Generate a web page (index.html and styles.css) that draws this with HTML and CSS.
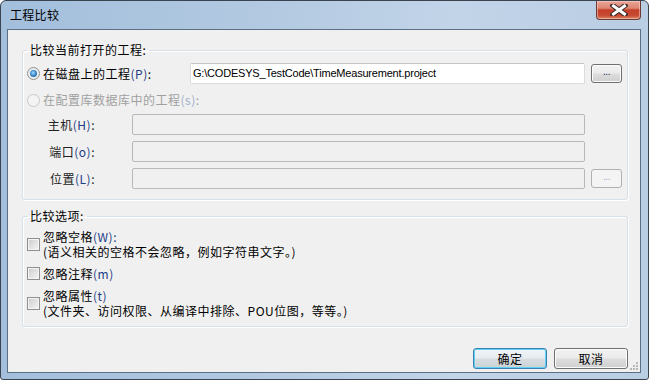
FILE: index.html
```html
<!DOCTYPE html>
<html>
<head>
<meta charset="utf-8">
<title>工程比较</title>
<link rel="stylesheet" href="styles.css">
</head>
<body>
<div class="window">
  <div class="titlebar">
    <span class="title">工程比较</span>
    <div class="close">
      <svg width="18" height="12" viewBox="0 0 18 12">
        <path d="M3 1.5 L15 10.5 M15 1.5 L3 10.5" stroke="#3b2a28" stroke-width="5" stroke-linecap="square"/>
        <path d="M3.5 2 L14.5 10 M14.5 2 L3.5 10" stroke="#ffffff" stroke-width="3" stroke-linecap="square"/>
      </svg>
    </div>
  </div>
  <div class="client">
    <fieldset class="group g1">
      <legend>比较当前打开的工程:</legend>
      <div class="row r1">
        <label class="opt"><span class="radio checked"></span>在磁盘上的工程<span class="acc">(P)</span>:</label>
        <div class="input">G:\CODESYS_TestCode\TimeMeasurement.project</div>
        <div class="btn small">...</div>
      </div>
      <div class="row r2">
        <label class="opt disabled"><span class="radio"></span>在配置库数据库中的工程<span class="acc">(s)</span>:</label>
      </div>
      <div class="row field">
        <span class="flabel">主机<span class="acc">(H)</span>:</span>
        <div class="input off"></div>
        <div class="spacer"></div>
      </div>
      <div class="row field">
        <span class="flabel">端口<span class="acc">(o)</span>:</span>
        <div class="input off"></div>
        <div class="spacer"></div>
      </div>
      <div class="row field">
        <span class="flabel">位置<span class="acc">(L)</span>:</span>
        <div class="input off"></div>
        <div class="btn small off">...</div>
      </div>
    </fieldset>
    <fieldset class="group g2">
      <legend>比较选项:</legend>
      <div class="check">
        <span class="box"></span>
        <div class="ctext"><span class="line">忽略空格<span class="acc">(W):</span></span><span class="line">(语义相关的空格不会忽略，例如字符串文字。)</span></div>
      </div>
      <div class="check">
        <span class="box"></span>
        <div class="ctext"><span class="line">忽略注释<span class="acc">(m)</span></span></div>
      </div>
      <div class="check">
        <span class="box"></span>
        <div class="ctext"><span class="line">忽略属性<span class="acc">(t)</span></span><span class="line">(文件夹、访问权限、从编译中排除、POU位图，等等。)</span></div>
      </div>
    </fieldset>
    <div class="buttons">
      <div class="btn big default">确定</div>
      <div class="btn big">取消</div>
    </div>
    <svg class="grip" width="8" height="8" viewBox="0 0 8 8">
      <g fill="#b8b8b8">
        <rect x="6" y="0" width="2" height="2"/>
        <rect x="3" y="3" width="2" height="2"/><rect x="6" y="3" width="2" height="2"/>
        <rect x="0" y="6" width="2" height="2"/><rect x="3" y="6" width="2" height="2"/><rect x="6" y="6" width="2" height="2"/>
      </g>
    </svg>
  </div>
</div>
</body>
</html>
```
FILE: styles.css
```css
html, body {
  margin: 0;
  padding: 0;
}
body {
  width: 649px;
  height: 380px;
  overflow: hidden;
  background: #ffffff;
  font-family: "Noto Sans CJK SC", "Noto Sans", sans-serif;
  font-size: 12px;
  letter-spacing: 0.5px;
  color: #000;
}
.window {
  box-sizing: border-box;
  width: 649px;
  height: 380px;
  border: 1px solid #3a4350;
  border-radius: 6px 6px 3px 3px;
  background: linear-gradient(to right, #a3bfdc 0%, #b2c9e1 40%, #c2d4e8 70%, #b9cde3 100%);
  padding: 0 7px 6px 6px;
  display: flex;
  flex-direction: column;
}
.titlebar {
  height: 28px;
  position: relative;
  flex: none;
}
.title {
  display: block;
  padding: 6px 0 0 3px;
  line-height: 16px;
  letter-spacing: 0.3px;
  color: #000;
}
.close {
  position: absolute;
  top: 0;
  right: 0;
  width: 45px;
  height: 19px;
  box-sizing: border-box;
  border: 1px solid #6b3a33;
  border-top: none;
  border-radius: 0 0 4px 4px;
  background: linear-gradient(#eaa597 0%, #dd8573 40%, #c43e28 50%, #c84a33 80%, #d9856a 100%);
  display: flex;
  align-items: center;
  justify-content: center;
  box-shadow: inset 0 0 0 1px rgba(255,220,210,0.5);
}
.client {
  flex: 1;
  border: 1px solid #5b6f85;
  background: #f0f0f0;
  position: relative;
  padding: 12px 12px 0 14px;
}
.group {
  margin: 0;
  border: 1px solid #d5dfe5;
  border-radius: 3px;
  min-width: 0;
  box-shadow: inset 1px 1px 0 #fff, 1px 1px 0 #fff;
}
.group legend {
  padding: 0 3px;
  margin: 0;
  line-height: 16px;
}
.g1 {
  padding: 5px 5px 10px 4px;
}
.g2 {
  margin-top: 8px;
  padding: 5px 5px 8px 4px;
}
.row {
  display: flex;
  align-items: center;
  gap: 6px;
}
.r1 {
  height: 21px;
}
.r2 {
  height: 16px;
  margin-top: 8px;
}
.field {
  height: 21px;
  margin-top: 6px;
}
.opt {
  display: flex;
  align-items: center;
  line-height: 16px;
  white-space: nowrap;
}
.r1 .opt {
  width: 157px;
  flex: none;
}
.opt.disabled {
  color: #a0a0a0;
}
.opt.disabled .acc {
  color: #9fb0c9;
}
.acc {
  color: #1f3d87;
}
.radio {
  width: 13px;
  height: 13px;
  box-sizing: border-box;
  border-radius: 50%;
  border: 1px solid #8e8f8f;
  background: radial-gradient(circle at 50% 50%, #d6d6d6 0%, #eeeeee 60%, #f8f8f8 100%);
  margin-right: 3px;
  position: relative;
  flex: none;
}
.radio.checked::after {
  content: "";
  position: absolute;
  left: 2px;
  top: 2px;
  width: 7px;
  height: 7px;
  border-radius: 50%;
  background: radial-gradient(circle at 45% 40%, #a8dcfd 0%, #3f8fd0 45%, #174f86 100%);
}
.opt.disabled .radio {
  border-color: #c9c9c9;
  background: #f4f4f4;
}
.input {
  flex: 1;
  height: 21px;
  box-sizing: border-box;
  border: 1px solid #dcdcdc;
  border-top-color: #c6c6c6;
  border-radius: 2px;
  background: #fff;
  font-family: "Liberation Sans", Arial, sans-serif;
  font-size: 11px;
  letter-spacing: -0.2px;
  line-height: 19px;
  padding-left: 2px;
  white-space: nowrap;
  overflow: hidden;
}
.input.off {
  background: #f0f0f0;
  border: 1px solid #b8b8b8;
  border-radius: 2px;
}
.flabel {
  flex: none;
  text-align: right;
  padding-right: 37px;
  box-sizing: border-box;
  line-height: 16px;
  white-space: nowrap;
  color: #222;
  width: 105px;
  margin-right: -6px;
}
.spacer {
  width: 31px;
  flex: none;
}
.btn {
  box-sizing: border-box;
  border: 1px solid #707070;
  border-radius: 3px;
  background: linear-gradient(#f2f2f2 0%, #ebebeb 48%, #dddddd 52%, #cfcfcf 100%);
  box-shadow: inset 0 0 0 1px #fbfbfb;
  display: flex;
  align-items: center;
  justify-content: center;
  flex: none;
}
.btn.small {
  width: 31px;
  height: 19px;
  font-family: "Liberation Sans", Arial, sans-serif;
  font-size: 10px;
  line-height: 10px;
  padding-bottom: 3px;
  letter-spacing: -0.5px;
  color: #1a2a5a;
}
.btn.off {
  border-color: #adb2b5;
  background: #f4f4f4;
  color: #a0a8c8;
  box-shadow: none;
}
.check {
  display: flex;
  align-items: center;
  gap: 3px;
}
.check + .check {
  margin-top: 7px;
}
.box {
  width: 13px;
  height: 13px;
  box-sizing: border-box;
  border: 1px solid #8e8f8f;
  background: linear-gradient(135deg, #cbcbcb 0%, #e6e6e6 60%, #f4f4f4 100%);
  box-shadow: inset 0 0 0 1px #f4f4f4;
  flex: none;
}
.ctext {
  display: flex;
  flex-direction: column;
}
.line {
  display: block;
  height: 15px;
  line-height: 15px;
  white-space: nowrap;
}
.buttons {
  display: flex;
  justify-content: flex-end;
  gap: 7px;
  margin-top: 21px;
}
.btn.big {
  width: 74px;
  height: 21px;
  line-height: 16px;
}
.btn.default {
  border-color: #3c7fb1;
  box-shadow: inset 0 0 0 1px #5fd0f6;
  background: linear-gradient(#f0f4f7 0%, #e6ecf0 48%, #d7dde1 52%, #cbd2d6 100%);
}
.grip {
  position: absolute;
  right: 2px;
  bottom: 2px;
}
```
